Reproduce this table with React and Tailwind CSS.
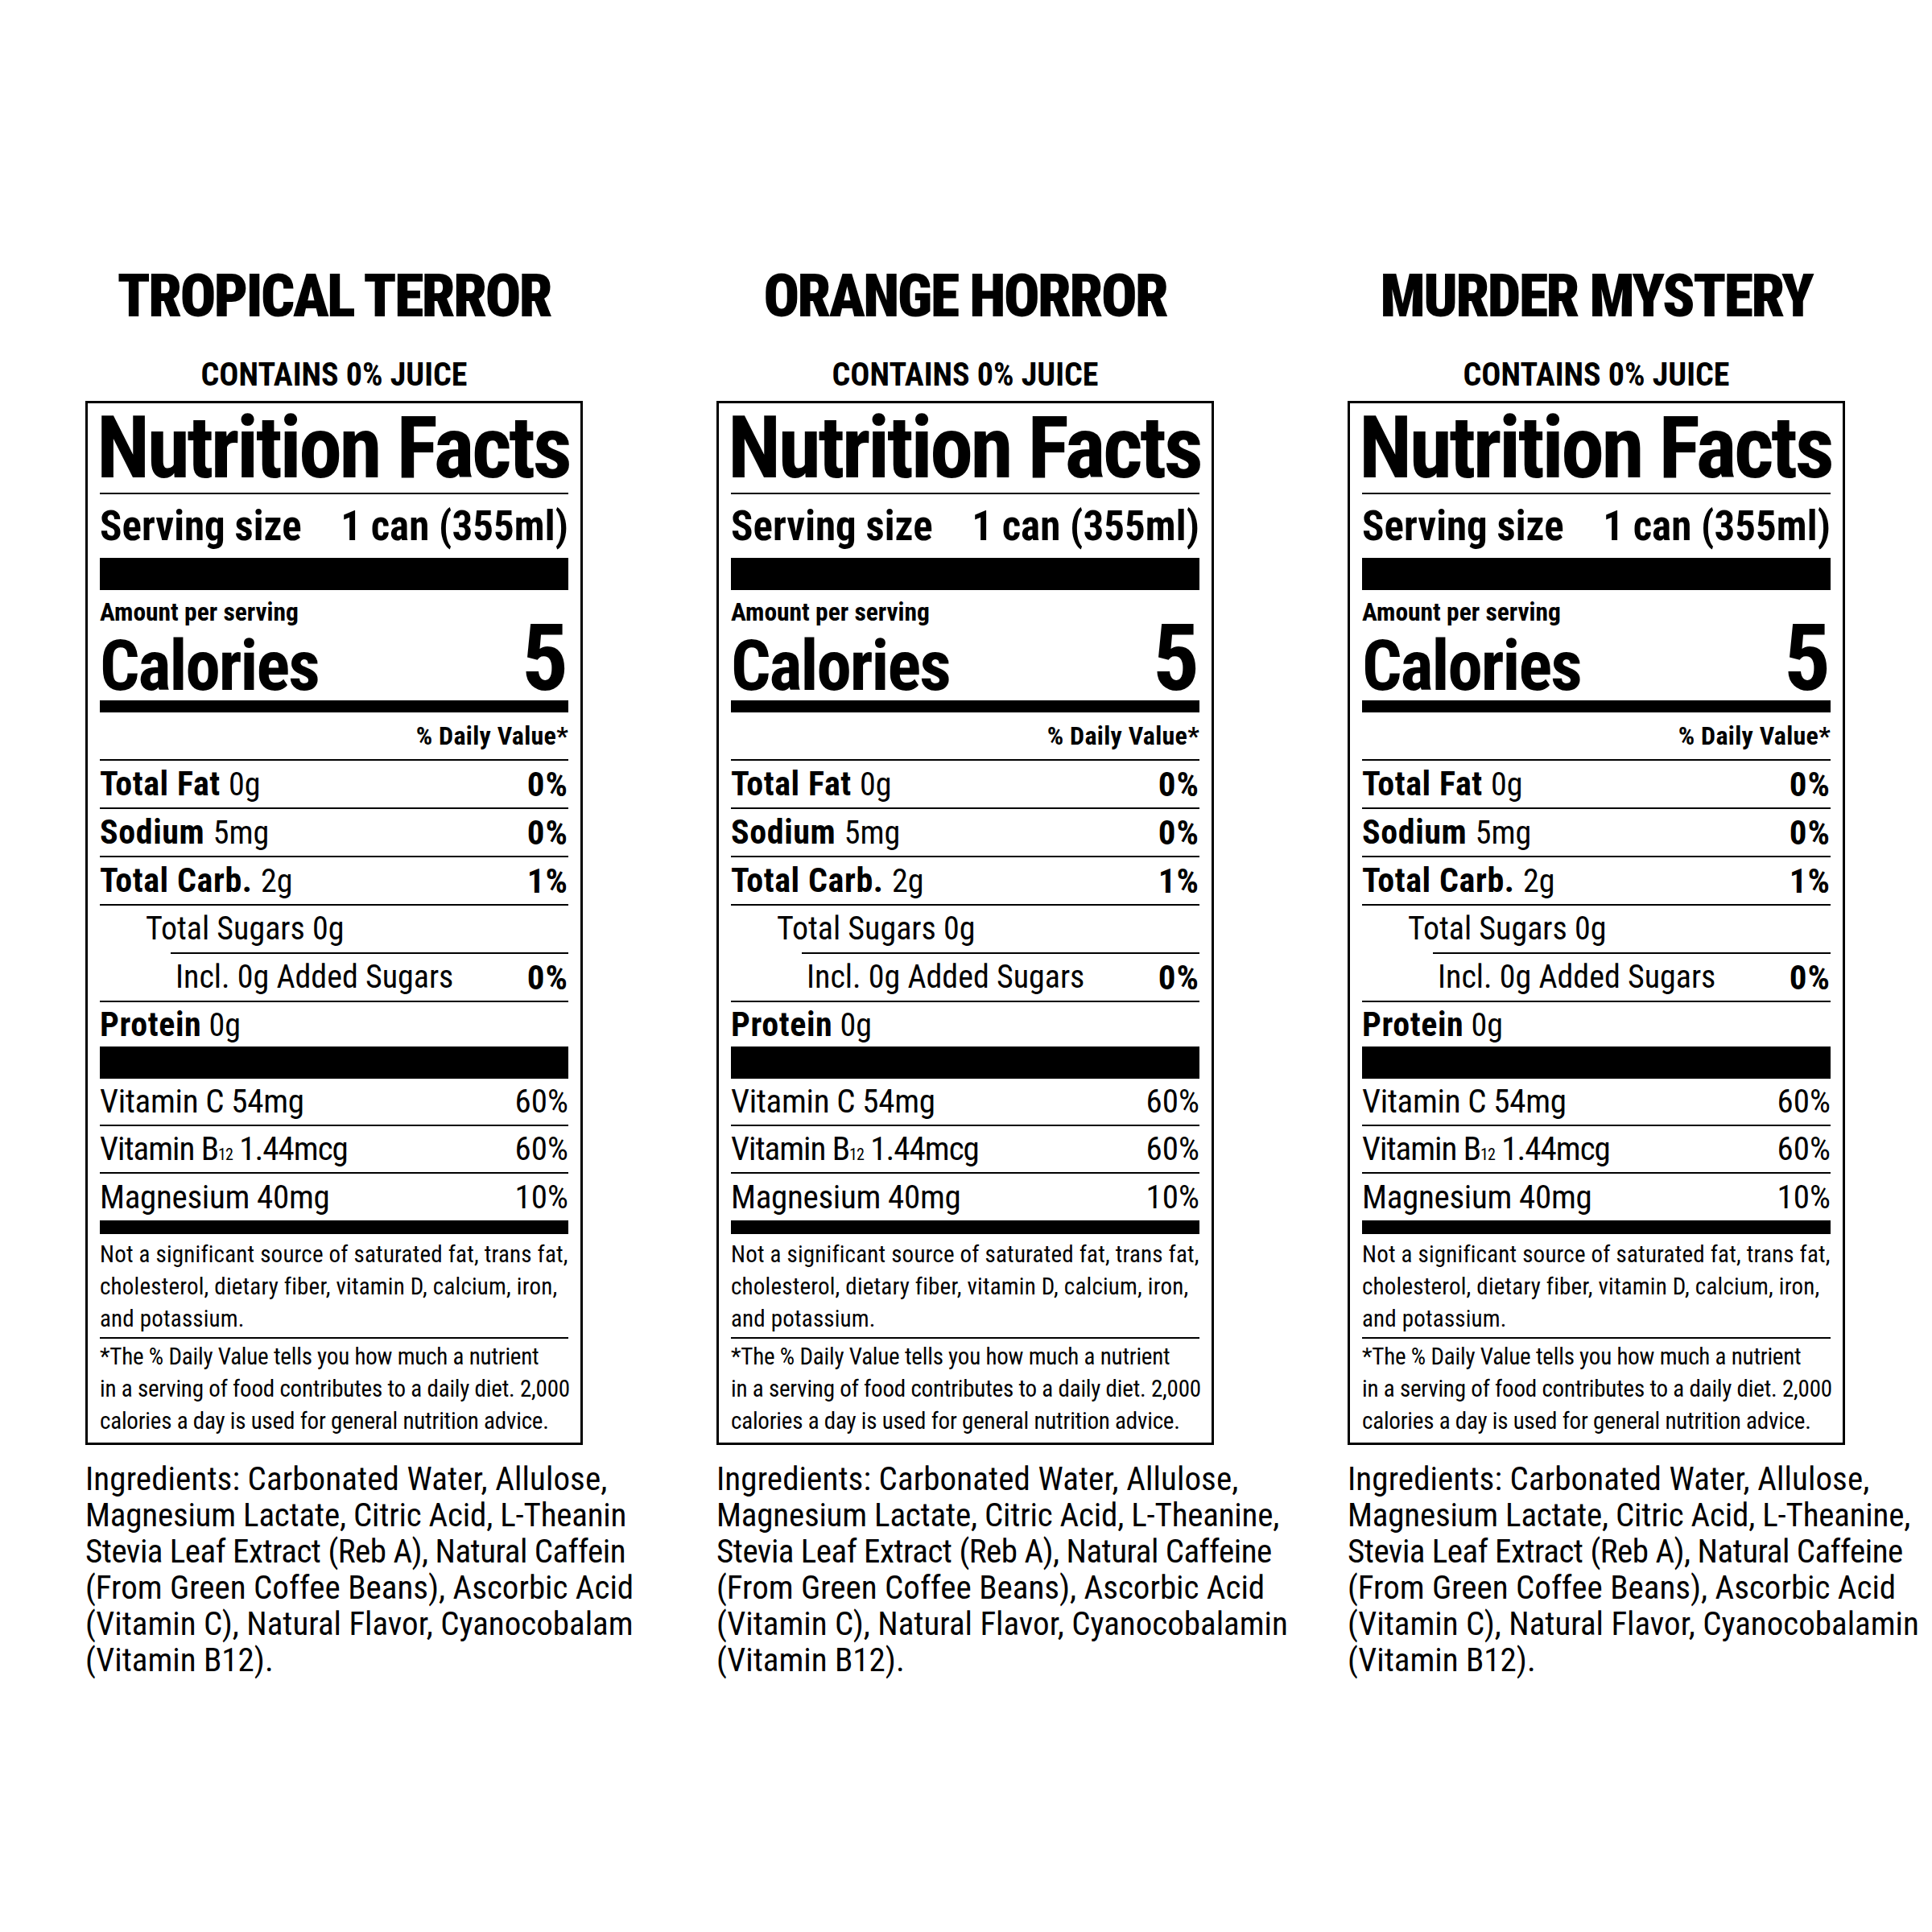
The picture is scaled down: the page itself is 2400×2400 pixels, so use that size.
const flavors = ['TROPICAL TERROR', 'ORANGE HORROR', 'MURDER MYSTERY'];

const ingredients = [
  'Ingredients: Carbonated Water, Allulose,',
  'Magnesium Lactate, Citric Acid, L-Theanine,',
  'Stevia Leaf Extract (Reb A), Natural Caffeine',
  '(From Green Coffee Beans), Ascorbic Acid',
  '(Vitamin C), Natural Flavor, Cyanocobalamin',
  '(Vitamin B12).',
];

// first label's print is cropped at the right edge
const croppedIngredients = [
  'Ingredients: Carbonated Water, Allulose,',
  'Magnesium Lactate, Citric Acid, L-Theanin',
  'Stevia Leaf Extract (Reb A), Natural Caffein',
  '(From Green Coffee Beans), Ascorbic Acid',
  '(Vitamin C), Natural Flavor, Cyanocobalam',
  '(Vitamin B12).',
];

// per-line tracking so the line ends match the print
const lineTracking = ['tracking-[0.1px]', 'tracking-[-0.2px]', 'tracking-[-0.5px]', '', '', ''];

const Rule = ({ className = '' }) => <div className={`h-[2px] bg-black ${className}`} />;

const NutrientRow = ({ label, amount, dv, className = '' }) => (
  <div className={`flex h-[58px] items-start justify-between leading-[58px] ${className}`}>
    <span className="text-[40px]">
      {label && <span className="text-[42px] font-bold tracking-[0.6px]">{label} </span>}
      {amount}
    </span>
    {dv && <span className="text-[43px] font-bold tracking-[1px]">{dv}</span>}
  </div>
);

const VitaminRow = ({ children, dv, h = 'h-[57px] leading-[57px]' }) => (
  <div className={`flex items-start justify-between text-[41px] ${h}`}>
    <span className="tracking-[-0.3px]">{children}</span>
    <span>{dv}</span>
  </div>
);

function Label() {
  return (
    <div className="w-[618px] border-[3px] border-black px-[15px] pb-[7px]">
      <div className="-ml-[4px] h-[111px] whitespace-nowrap text-[108px] font-bold leading-[111px] tracking-[-3.5px]">
        Nutrition Facts
      </div>
      <Rule />
      <div className="flex h-[79px] justify-between whitespace-nowrap text-[51px] font-bold leading-[79px]">
        <span>Serving size</span>
        <span>1 can (355ml)</span>
      </div>
      <div className="h-[40px] bg-black" />
      <div className="h-[55px] text-[31.5px] font-bold leading-[55px]">Amount per serving</div>
      <div className="flex h-[82px] items-start justify-between font-bold">
        <span className="text-[87px] leading-[79px] tracking-[-2px]">Calories</span>
        <span className="text-[115px] leading-[59px]">5</span>
      </div>
      <div className="h-[15px] bg-black" />
      <div className="h-[58px] text-right text-[32px] font-bold leading-[58px] tracking-[0.3px]">% Daily Value*</div>
      <Rule />
      <NutrientRow label="Total Fat" amount="0g" dv="0%" />
      <Rule />
      <NutrientRow label="Sodium" amount="5mg" dv="0%" />
      <Rule />
      <NutrientRow label="Total Carb." amount="2g" dv="1%" />
      <Rule />
      <NutrientRow amount="Total Sugars 0g" className="pl-[57px]" />
      <Rule className="ml-[88px]" />
      <NutrientRow amount="Incl. 0g Added Sugars" dv="0%" className="pl-[94px]" />
      <Rule />
      <div className="h-[55px] leading-[55px]">
        <span className="text-[42px] font-bold tracking-[0.6px]">Protein</span>
        <span className="text-[40px]"> 0g</span>
      </div>
      <div className="h-[40px] bg-black" />
      <VitaminRow dv="60%">Vitamin C 54mg</VitaminRow>
      <Rule />
      <VitaminRow dv="60%">
        <span className="tracking-[-1px]">
          Vitamin B<span className="text-[20px] tracking-[-1px]">12</span> 1.44mcg
        </span>
      </VitaminRow>
      <Rule />
      <VitaminRow dv="10%" h="h-[58px] leading-[58px]">Magnesium 40mg</VitaminRow>
      <div className="h-[17px] bg-black" />
      <p className="whitespace-nowrap pb-[3px] pt-[5px] text-[29px] leading-[40px] tracking-[0.2px]">
        Not a significant source of saturated fat, trans fat,
        <br />
        cholesterol, dietary fiber, vitamin D, calcium, iron,
        <br />
        and potassium.
      </p>
      <Rule />
      <p className="whitespace-nowrap pt-[2px] text-[29px] leading-[40px] tracking-[-0.2px]">
        *The % Daily Value tells you how much a nutrient
        <br />
        in a serving of food contributes to a daily diet. 2,000
        <br />
        calories a day is used for general nutrition advice.
      </p>
    </div>
  );
}

function Panel({ title, lines }) {
  return (
    <div className="w-[784px] shrink-0 pl-[106px] pt-[328px]">
      <div className="h-[76px] w-[618px] whitespace-nowrap text-center text-[74px] font-black leading-[80px] tracking-[-2.5px]">
        {title}
      </div>
      <div className="mt-[32px] w-[618px] text-center text-[40px] font-bold leading-[60px]">CONTAINS 0% JUICE</div>
      <div className="mt-[2px]">
        <Label />
      </div>
      <div className="mt-[20px] whitespace-nowrap text-[41px] leading-[45px]">
        {lines.map((line, i) => (
          <div key={i} className={lineTracking[i]}>
            {line}
          </div>
        ))}
      </div>
    </div>
  );
}

export default function App() {
  return (
    <div className="flex h-[2400px] w-[2400px] overflow-hidden bg-white font-['Roboto_Condensed','Roboto',sans-serif] text-black">
      {flavors.map((f, i) => (
        <Panel key={f} title={f} lines={i === 0 ? croppedIngredients : ingredients} />
      ))}
    </div>
  );
}
